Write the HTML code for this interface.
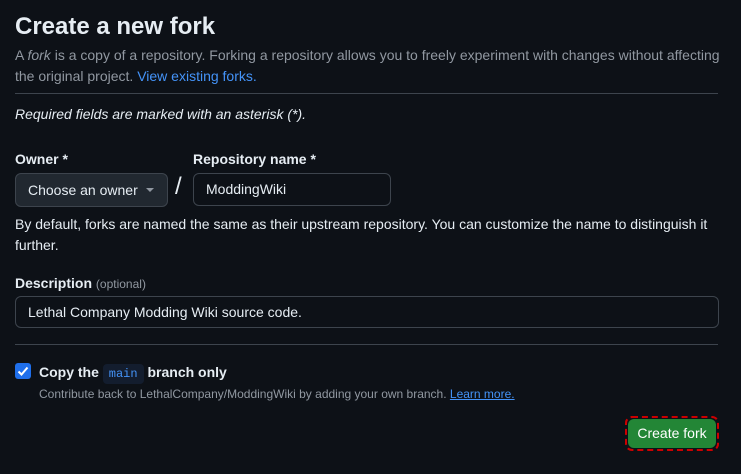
<!DOCTYPE html>
<html><head><meta charset="utf-8"><style>
body{margin:0;width:741px;height:474px;background:#0d1117;font-family:"Liberation Sans",sans-serif;color:#e6edf3;position:relative;overflow:hidden}
.a{position:absolute;white-space:nowrap}
.m{color:#9198a1}
a{color:#4493f8;text-decoration:none}
.box{position:absolute;border:1px solid #3d444d;border-radius:6px;background:#0d1117;box-sizing:border-box;font-size:14px;line-height:30px;padding-left:12px}
</style></head><body>
<div class="a" style="left:15px;top:13px;font-size:24px;font-weight:bold">Create a new fork</div>
<div class="a m" style="left:15px;top:45px;font-size:14px;line-height:21px">A <i>fork</i> is a copy of a repository. Forking a repository allows you to freely experiment with changes without affecting<br>the original project. <a>View existing forks.</a></div>
<div class="a" style="left:15px;top:93px;width:703px;height:1px;background:#3d444d"></div>
<div class="a" style="left:15px;top:106px;font-size:14px;font-style:italic">Required fields are marked with an asterisk (*).</div>
<div class="a" style="left:15px;top:151px;font-size:14px;font-weight:bold">Owner *</div>
<div class="a" style="left:193px;top:151px;font-size:14px;font-weight:bold">Repository name *</div>
<div class="box" style="left:15px;top:173px;width:153px;height:34px;background:#212830;border-color:#3d444d;line-height:32px">Choose an owner <span style="position:absolute;left:130px;top:14px;border:4px solid transparent;border-top-color:#9198a1;border-bottom:0"></span></div>
<div class="a" style="left:175px;top:173px;font-size:24px;color:#e6edf3">/</div>
<div class="box" style="left:193px;top:173px;width:198px;height:33px;">ModdingWiki</div>
<div class="a" style="left:15px;top:214px;font-size:14px;line-height:21px">By default, forks are named the same as their upstream repository. You can customize the name to distinguish it<br>further.</div>
<div class="a" style="left:15px;top:275px;font-size:14px"><b>Description</b> <span class="m" style="font-size:12px">(optional)</span></div>
<div class="box" style="left:15px;top:296px;width:704px;height:32px">Lethal Company Modding Wiki source code.</div>
<div class="a" style="left:15px;top:344px;width:703px;height:1px;background:#3d444d"></div>
<svg class="a" style="left:15px;top:363px" width="16" height="16" viewBox="0 0 16 16"><rect width="16" height="16" rx="3" fill="#1f6feb"/><path d="M3.5 8.5l3 3 6-7" stroke="#fff" stroke-width="2" fill="none"/></svg>
<div class="a" style="left:39px;top:364px;font-size:14px;font-weight:bold">Copy the <span style="background:#131d2e;color:#4493f8;font-family:'Liberation Mono',monospace;font-weight:normal;font-size:12px;padding:3px 6px;border-radius:4px">main</span> branch only</div>
<div class="a m" style="left:39px;top:387px;font-size:12px">Contribute back to LethalCompany/ModdingWiki by adding your own branch. <a style="text-decoration:underline">Learn more.</a></div>
<div class="a" style="left:625px;top:416px;width:94px;height:35px;box-sizing:border-box;border:2px dashed #c00;border-radius:7px;"></div>
<div class="a" style="left:628px;top:419px;width:88px;height:29px;background:#238636;border-radius:6px;color:#fff;font-size:14px;line-height:29px;text-align:center">Create fork</div>
</body></html>
